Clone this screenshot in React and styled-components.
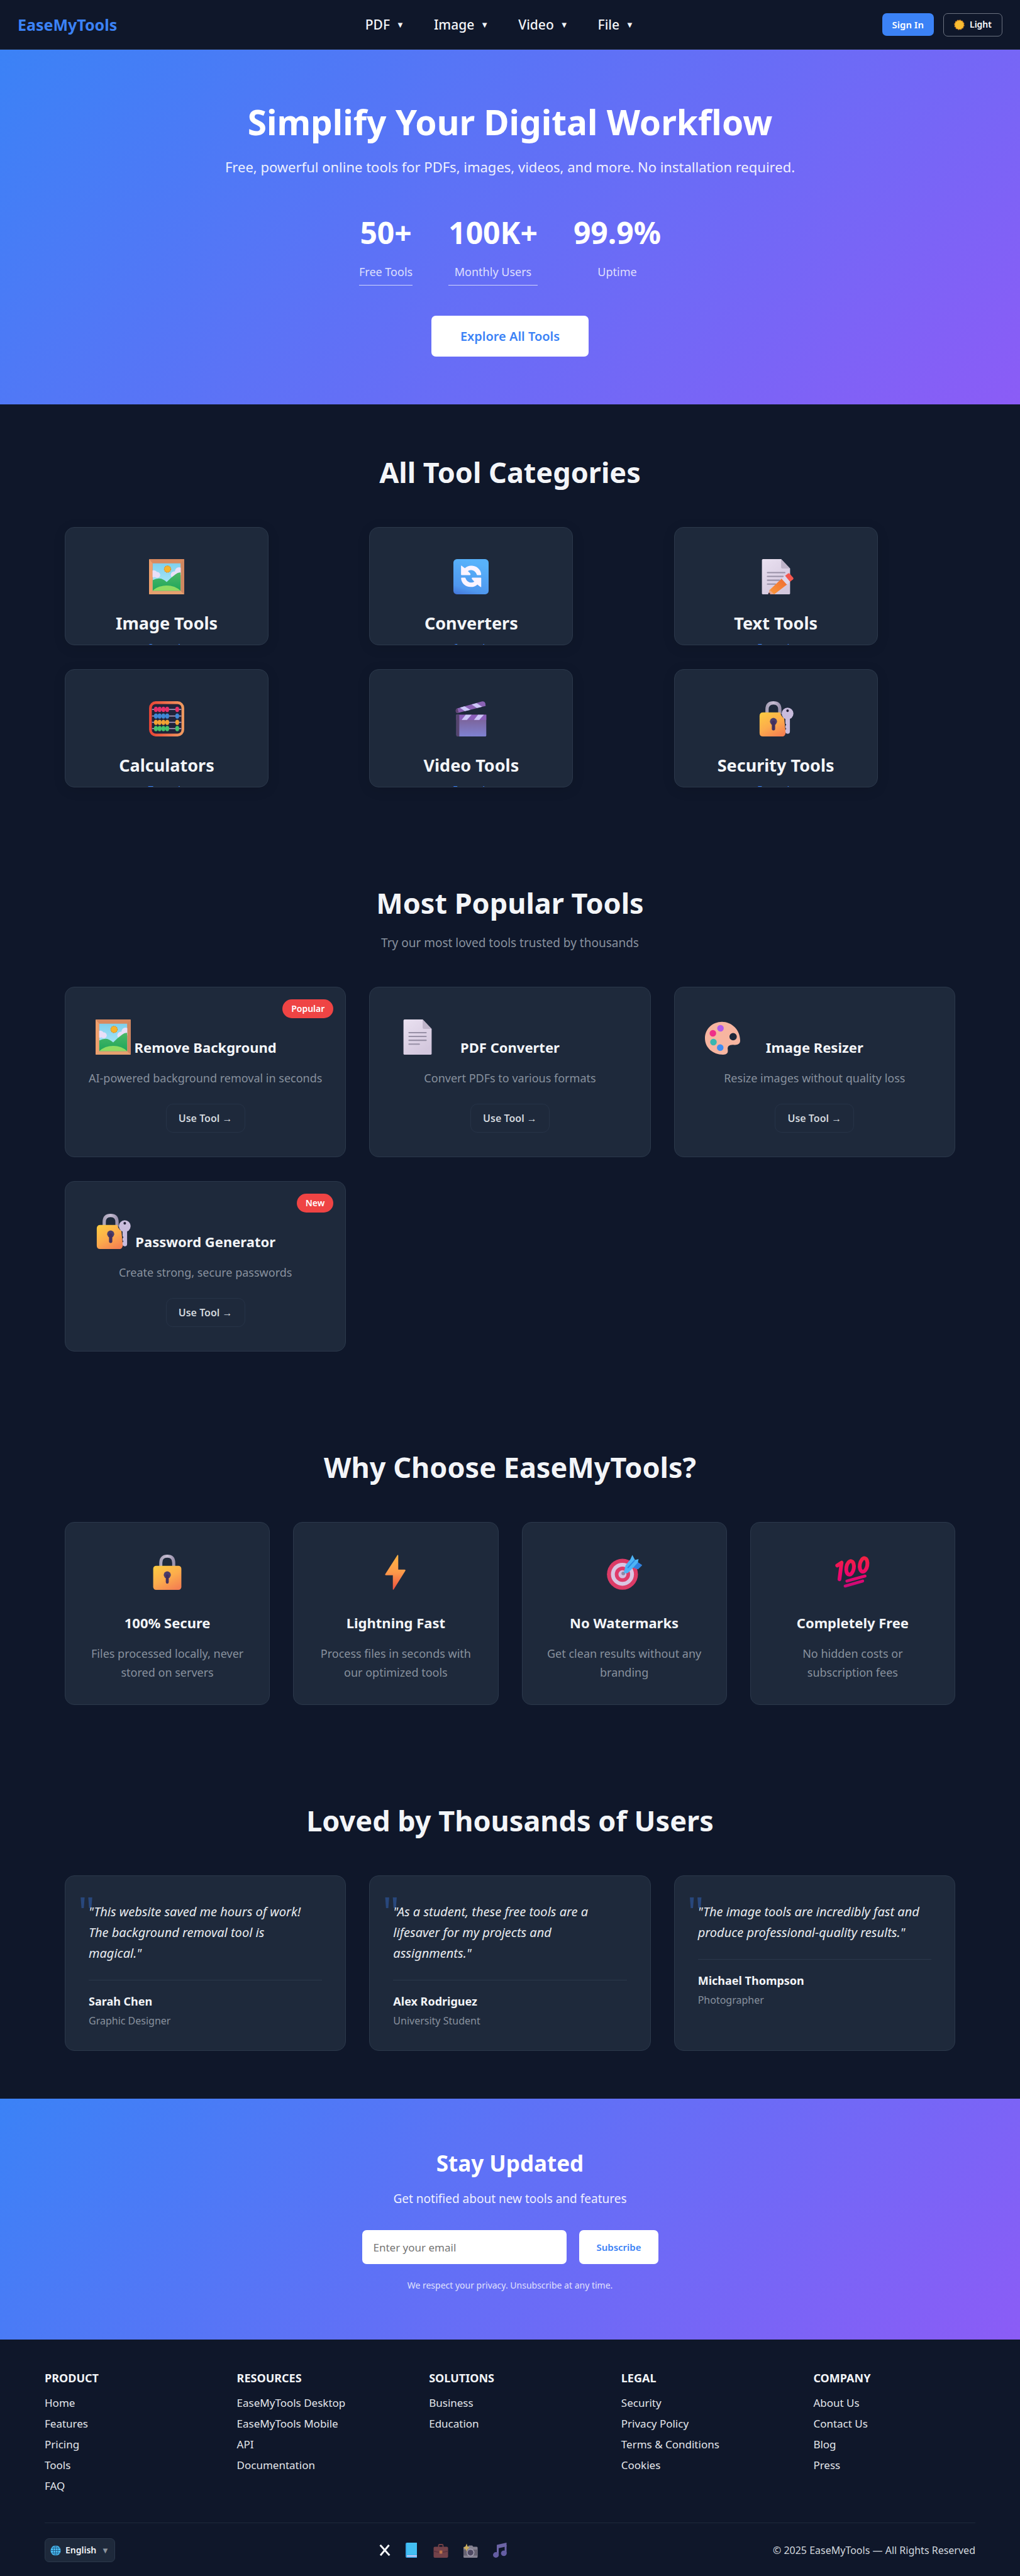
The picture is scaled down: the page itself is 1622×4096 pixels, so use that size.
import React from 'react';
import styled, { createGlobalStyle, css } from 'styled-components';

const color = {
  bg: '#0f172a',
  card: '#1e293b',
  line: '#2b384b',
  text: '#f3f5f8',
  soft: '#d3d8de',
  muted: '#88919e',
  blue: '#3b82f6',
  red: '#ef4444',
};
const gradient = 'linear-gradient(135deg, #3b82f6 0%, #8b5cf6 100%)';

const GlobalStyle = createGlobalStyle`
  *, *::before, *::after { box-sizing: border-box; }
  body {
    margin: 0;
    background: ${color.bg};
    color: ${color.text};
    font-family: "Segoe UI", "Noto Sans", "Open Sans", sans-serif;
    font-size: 18px;
  }
  h1, h2, h3, h4, p, ul { margin: 0; padding: 0; }
  ul { list-style: none; }
  a { color: inherit; text-decoration: none; }
  button, input, select { font-family: inherit; }
`;

/* ---------- header ---------- */
const Header = styled.header`
  display: flex;
  align-items: center;
  justify-content: space-between;
  height: 79px;
  padding: 0 28px;
  border-bottom: 1px solid ${color.card};
`;
const Logo = styled.a`
  color: ${color.blue};
  font-size: 25px;
  font-weight: 700;
  line-height: 36px;
`;
const Nav = styled.nav`
  display: flex;
  gap: 47px;
`;
const NavItem = styled.button`
  display: flex;
  align-items: center;
  gap: 10px;
  padding: 0;
  border: 0;
  background: none;
  color: ${color.text};
  font-size: 21px;
  font-weight: 500;
  line-height: 30px;
  cursor: pointer;
`;
const Caret = styled.span`
  font-size: 13px;
  line-height: 16px;
  color: ${(p) => (p.$dim ? '#8b939d' : 'inherit')};
`;
const Actions = styled.div`
  display: flex;
  align-items: center;
  gap: 15px;
`;
const HeaderButton = styled.button`
  display: flex;
  align-items: center;
  justify-content: center;
  gap: 8px;
  height: 36px;
  padding: 0 16px;
  border: 0;
  border-radius: 7px;
  background: ${color.blue};
  color: #fff;
  font-size: 15px;
  font-weight: 600;
  line-height: 22px;
  cursor: pointer;
  ${(p) =>
    p.$outline &&
    css`
      height: 37px;
      border: 1px solid #6b7280;
      background: transparent;
      font-size: 14px;
    `}
`;

/* ---------- hero ---------- */
const Hero = styled.section`
  display: flex;
  flex-direction: column;
  align-items: center;
  padding: 80px 24px 76px;
  background: ${gradient};
  color: #fff;
  text-align: center;
`;
const HeroTitle = styled.h1`
  font-size: 55px;
  font-weight: 700;
  line-height: 70px;
`;
const HeroLead = styled.p`
  margin-top: 18px;
  font-size: 22px;
  line-height: 36px;
  opacity: 0.9;
`;
const Stats = styled.div`
  display: flex;
  gap: 57px;
  margin-top: 56px;
`;
const Stat = styled.div`
  display: flex;
  flex-direction: column;
  gap: 16px;
`;
const StatValue = styled.strong`
  font-size: 48px;
  font-weight: 700;
  line-height: 62px;
`;
const StatLabel = styled.span`
  padding-bottom: 6px;
  border-bottom: 1px solid ${(p) => (p.$plain ? 'transparent' : 'rgba(255, 255, 255, 0.7)')};
  color: rgba(255, 255, 255, 0.8);
  line-height: 30px;
`;
const HeroButton = styled.a`
  margin-top: 48px;
  padding: 0 46px;
  border-radius: 7px;
  background: #fff;
  color: ${color.blue};
  font-size: 20px;
  font-weight: 600;
  line-height: 65px;
`;

/* ---------- shared section parts ---------- */
const Section = styled.section`
  padding: 76px 24px;
`;
const Container = styled.div`
  max-width: 1416px;
  margin: 0 auto;
`;
const SectionHead = styled.div`
  margin-bottom: 55px;
  text-align: center;
`;
const SectionTitle = styled.h2`
  font-size: 45px;
  font-weight: 700;
  line-height: 64px;
`;
const SectionLead = styled.p`
  margin-top: 16px;
  color: ${color.muted};
  font-size: 19px;
  line-height: 30px;
`;
const Grid = styled.div`
  display: grid;
  grid-template-columns: repeat(${(p) => p.$columns}, minmax(0, 1fr));
  gap: 38px 37px;
`;
const Card = styled.article`
  border: 1px solid ${color.line};
  border-radius: 15px;
  background: ${color.card};
`;
const Icon = styled.svg`
  display: block;
  flex: none;
  width: ${(p) => p.$size || 56}px;
  height: ${(p) => p.$size || 56}px;
  opacity: ${(p) => (p.$dim ? 0.8 : 1)};
`;

const CategoryCard = styled(Card)`
  display: flex;
  flex-direction: column;
  align-items: center;
  max-width: 324px;
  height: 188px;
  padding-top: 50px;
  overflow: hidden;
  box-shadow: 0 4px 20px rgba(0, 0, 0, 0.1);
`;
const CategoryName = styled.h3`
  margin-top: 28px;
  font-size: 27px;
  font-weight: 700;
  line-height: 36px;
`;
const CategoryCount = styled.p`
  margin-top: 8px;
  color: ${color.blue};
  font-size: 16px;
  line-height: 26px;
`;

const ToolCard = styled(Card)`
  position: relative;
  display: flex;
  flex-direction: column;
  align-items: center;
  padding: 51px 34px 38px;
`;
const Badge = styled.span`
  position: absolute;
  top: 19px;
  right: 19px;
  padding: 0 14px;
  border-radius: 15px;
  background: ${color.red};
  color: #fff;
  font-size: 14px;
  font-weight: 600;
  line-height: 30px;
`;
const ToolHead = styled.div`
  display: grid;
  align-self: stretch;
  height: 60px;
  padding: 0 14px;

  > * {
    grid-area: 1 / 1;
  }
`;
const CardTitle = styled.h3`
  align-self: end;
  font-size: 22px;
  font-weight: 700;
  line-height: 32px;
  text-align: center;
`;
const CardText = styled.p`
  margin-top: 18px;
  color: ${color.muted};
  line-height: 30px;
  text-align: center;
`;
const UseButton = styled.a`
  margin-top: 26px;
  padding: 0 19px;
  border: 1px solid #263347;
  border-radius: 11px;
  color: ${color.soft};
  font-size: 16px;
  font-weight: 600;
  line-height: 44px;
`;

const FeatureCard = styled(Card)`
  display: flex;
  flex-direction: column;
  align-items: center;
  padding: 51px 37px 36px;
`;
const FeatureTitle = styled(CardTitle)`
  align-self: center;
  margin-top: 36px;
`;

const ReviewCard = styled(Card)`
  position: relative;
  padding: 40px 37px 34px;
`;
const QuoteMark = styled.span`
  position: absolute;
  top: 22px;
  left: 20px;
  color: rgba(59, 130, 246, 0.35);
  font-size: 66px;
  line-height: 66px;
`;
const ReviewText = styled.p`
  position: relative;
  padding-right: 12px;
  color: #e8ebef;
  font-size: 20px;
  font-style: italic;
  line-height: 33px;
`;
const Reviewer = styled.div`
  display: flex;
  flex-direction: column;
  gap: 3px;
  margin-top: 26px;
  padding-top: 18px;
  border-top: 1px solid ${color.line};
`;
const ReviewerName = styled.strong`
  font-weight: 700;
  line-height: 30px;
`;
const ReviewerRole = styled.span`
  color: ${color.muted};
  font-size: 16px;
  line-height: 26px;
`;

/* ---------- newsletter ---------- */
const Newsletter = styled.section`
  display: flex;
  flex-direction: column;
  align-items: center;
  padding: 76px 24px 74px;
  background: ${gradient};
  color: #fff;
  text-align: center;
`;
const NewsTitle = styled.h2`
  font-size: 35px;
  font-weight: 700;
  line-height: 54px;
`;
const NewsLead = styled.p`
  margin-top: 13px;
  font-size: 19px;
  line-height: 32px;
  opacity: 0.9;
`;
const NewsForm = styled.form`
  display: flex;
  gap: 20px;
  width: 100%;
  max-width: 471px;
  margin-top: 34px;
`;
const EmailInput = styled.input`
  flex: 1;
  min-width: 0;
  height: 54px;
  padding: 0 18px;
  border: 0;
  border-radius: 7px;
  background: #fff;
  color: #111827;
  font-size: 17px;

  &::placeholder {
    color: #757575;
    opacity: 1;
  }
`;
const Subscribe = styled.button`
  padding: 0 27px;
  border: 0;
  border-radius: 7px;
  background: #fff;
  color: ${color.blue};
  font-size: 15px;
  font-weight: 600;
  cursor: pointer;
`;
const NewsNote = styled.p`
  margin-top: 22px;
  font-size: 14px;
  line-height: 24px;
  opacity: 0.8;
`;

/* ---------- footer ---------- */
const Footer = styled.footer`
  padding: 47px 24px 22px;
`;
const FooterInner = styled.div`
  max-width: 1480px;
  margin: 0 auto;
`;
const FooterColumns = styled.div`
  display: grid;
  grid-template-columns: repeat(5, minmax(0, 1fr));
  gap: 48px;
`;
const FooterHeading = styled.h4`
  font-size: 18px;
  font-weight: 700;
  line-height: 28px;
`;
const FooterLinks = styled.ul`
  display: flex;
  flex-direction: column;
  gap: 9px;
  margin-top: 14px;
  color: #e3e6ea;
  font-size: 17px;
  line-height: 24px;
`;
const FooterBar = styled.div`
  display: flex;
  align-items: center;
  justify-content: space-between;
  margin-top: 46px;
  padding-top: 24px;
  border-top: 1px solid ${color.card};
`;
const Language = styled.label`
  display: flex;
  align-items: center;
  gap: 7px;
  height: 38px;
  padding: 0 8px;
  border: 1px solid ${color.line};
  border-radius: 7px;
  background: ${color.card};
`;
const LanguageSelect = styled.select`
  appearance: none;
  padding: 0;
  border: 0;
  background: none;
  color: ${color.text};
  font-size: 14px;
  font-weight: 600;
  line-height: 22px;
`;
const Socials = styled.div`
  display: flex;
  align-items: center;
  gap: 19px;
`;
const SocialLink = styled.a`
  display: flex;
  justify-content: center;
  width: ${(p) => (p.$narrow ? 18 : 28)}px;
`;
const Copyright = styled.p`
  color: ${color.soft};
  font-size: 16px;
  line-height: 26px;
`;

/* ---------- drawings ---------- */
const Picture = () => (
  <Icon viewBox="0 0 60 60" aria-hidden="true">
    <defs>
      <linearGradient id="sky" x1="0" y1="0" x2="0" y2="1">
        <stop offset="0" stopColor="#7fd0ee" />
        <stop offset="1" stopColor="#b5ecf8" />
      </linearGradient>
      <linearGradient id="hill" x1="0" y1="0" x2="0" y2="1">
        <stop offset="0" stopColor="#4cb868" />
        <stop offset="1" stopColor="#1fa65a" />
      </linearGradient>
      <clipPath id="pane"><rect x="6" y="7" width="48" height="47" /></clipPath>
    </defs>
    <rect width="60" height="60" rx="1" fill="#d98a5f" />
    <path d="M0 0L6 7V54L0 60Z" fill="#ef9f6c" />
    <path d="M0 60L6 54H54L60 60Z" fill="#e6a06f" />
    <path d="M60 0L54 7V54L60 60Z" fill="#cf8660" />
    <g clipPath="url(#pane)">
      <rect x="6" y="7" width="48" height="47" fill="url(#sky)" />
      <circle cx="8" cy="25" r="6" fill="#e9dff8" />
      <circle cx="14" cy="27" r="5" fill="#e9dff8" />
      <circle cx="43" cy="27" r="6" fill="#e9dff8" />
      <circle cx="51" cy="21" r="7" fill="#e9dff8" />
      <circle cx="31.5" cy="17" r="5.6" fill="#f7b32b" stroke="#e08f1d" strokeWidth="1.2" strokeDasharray="2 1" />
      <path d="M6 36Q12 33 17 33Q23 33 30 39Q38 31 45 26Q50 22 54 23V54H6Z" fill="url(#hill)" />
      <path d="M6 54Q16 45 30 45Q44 45 54 54Z" fill="#8fdb62" />
    </g>
  </Icon>
);

const Refresh = () => (
  <Icon viewBox="0 0 60 60" aria-hidden="true">
    <defs>
      <linearGradient id="tile" x1="0.3" y1="0" x2="0" y2="1">
        <stop offset="0" stopColor="#58b2fb" />
        <stop offset="0.75" stopColor="#4f97ee" />
        <stop offset="1" stopColor="#4374d8" />
      </linearGradient>
      <path id="turn" d="M13 12Q13 10.5 14.3 11.5L19.5 15.5C23 12.5 27 11 31 11.3C40 11.5 47 18 47.3 26.5Q47 27.3 46.5 27.3H40.7Q40 27.3 39.8 26.5C37.5 19.5 30 16.8 24.8 20.5L28.6 24.5Q30 27.3 28 27.3H14Q13 27.3 13 26.3Z" />
    </defs>
    <rect width="60" height="60" rx="6" fill="url(#tile)" />
    <use href="#turn" fill="#fbf4ff" />
    <use href="#turn" fill="#fbf4ff" transform="rotate(180 30.2 29.4)" />
  </Icon>
);

const Sheet = ({ pencil }) => (
  <Icon viewBox="0 0 60 60" aria-hidden="true">
    <defs>
      <linearGradient id="sheet" x1="0" y1="0" x2="0.6" y2="1">
        <stop offset="0" stopColor="#eae1f1" />
        <stop offset="1" stopColor="#d3c7dd" />
      </linearGradient>
      <linearGradient id="pencil" x1="0" y1="1" x2="1" y2="0">
        <stop offset="0" stopColor="#fb9a3a" />
        <stop offset="1" stopColor="#ee6a33" />
      </linearGradient>
    </defs>
    <path d="M8 0H38.7L54 16V58Q54 60 52 60H8Q6 60 6 58V2Q6 0 8 0Z" fill="url(#sheet)" />
    <path d="M38.7 0L54 16H40.7Q38.7 16 38.7 14Z" fill="#bfb4c9" />
    <path
      d={pencil ? 'M15.5 23H45M15.5 29.5H42M15.5 36H36M15.5 42.5H29' : 'M15.5 22.5H44.5M15.5 29H44.5M15.5 35.5H44.5M15.5 42H33'}
      stroke="#9890a6"
      strokeWidth="2.2"
      strokeLinecap="round"
    />
    {pencil && (
      <g>
        <path d="M40 33L49 43L27 60H17.5L18.7 53Z" fill="url(#pencil)" />
        <path d="M18.7 52L27 60H17.3Z" fill="#e8a58c" />
        <circle cx="18.3" cy="58.8" r="1.6" fill="#3a2638" />
        <path d="M39.5 33.5L45.5 28.5L54 38.5L48.5 43.5Z" fill="#ded7ec" />
        <path d="M45.5 28.5L50 24.8Q52 23.5 53.6 25.2L59.2 31.5Q60.4 33.2 59 34.6L54 38.5Z" fill="#f4574f" />
      </g>
    )}
  </Icon>
);

const beadRows = [
  [14, '#e8306b'],
  [25.3, '#3f87d6'],
  [36, '#f2a233'],
  [46.6, '#45c46c'],
];
const Abacus = () => (
  <Icon viewBox="0 0 60 60" aria-hidden="true">
    <defs>
      <linearGradient id="rim" x1="0" y1="0" x2="1" y2="0">
        <stop offset="0" stopColor="#ea4636" />
        <stop offset="1" stopColor="#f09a60" />
      </linearGradient>
    </defs>
    <rect x="2.4" y="2.4" width="55.2" height="55.2" rx="9" fill="#20233a" stroke="url(#rim)" strokeWidth="4.6" />
    {beadRows.map(([y, fill]) => (
      <g key={y}>
        <path d={`M5 ${y}H55`} stroke="#b9a9c9" strokeWidth="1.6" />
        {[11.7, 18, 24.5, 31, 48].map((x) => (
          <ellipse key={x} cx={x} cy={y} rx="3.3" ry="4.5" fill={fill} />
        ))}
      </g>
    ))}
  </Icon>
);

const Clapper = () => (
  <Icon viewBox="0 0 60 60" aria-hidden="true">
    <defs>
      <linearGradient id="slate" x1="0" y1="0" x2="0" y2="1">
        <stop offset="0" stopColor="#7b5c8c" />
        <stop offset="1" stopColor="#7f82d2" />
      </linearGradient>
    </defs>
    <path d="M7 12L49 0.3Q53 -0.3 54.3 3.5L55 8L7 20Q4 20 4 16Q4 13 7 12Z" fill="#8a62b4" />
    <path d="M4 16Q4 13 7 12L9 19.5L7 20Q4 20 4 16Z" fill="#5d4370" />
    <path d="M11 11L19 8.7L29 14.7L19.5 17Z" fill="#cdc6f8" />
    <path d="M31 5.5L39.5 3.2L49 9.5L40 11.6Z" fill="#cdc6f8" />
    <path d="M5 23H56V58Q56 60 54 60H8Q5 60 5 57Z" fill="url(#slate)" />
    <path d="M5 23H56V32H5Z" fill="#8a5fba" />
    <path d="M5 23H10V60H8Q5 60 5 57Z" fill="#55446e" />
    <path d="M21 23H31L23 32H14Z" fill="#cdc6f8" />
    <path d="M42 23H52L44 32H35Z" fill="#cdc6f8" />
  </Icon>
);

const Padlock = ({ withKey }) => (
  <Icon viewBox="0 0 60 60" aria-hidden="true">
    <defs>
      <linearGradient id="brass" x1="0.2" y1="0" x2="0.8" y2="1">
        <stop offset="0" stopColor="#fdc842" />
        <stop offset="0.5" stopColor="#fcac4c" />
        <stop offset="1" stopColor="#f47f52" />
      </linearGradient>
      <linearGradient id="steel" x1="0" y1="0" x2="1" y2="0">
        <stop offset="0" stopColor="#a9a2b8" />
        <stop offset="0.5" stopColor="#c6bdd3" />
        <stop offset="1" stopColor="#9c93ae" />
      </linearGradient>
    </defs>
    {withKey ? (
      <g>
        <path d="M14.7 22V14Q14.7 2.8 25.6 2.8Q36.5 2.8 36.5 14V22" fill="none" stroke="url(#steel)" strokeWidth="5.5" />
        <path d="M8 19H37Q38 25 44 29.5L46.5 54Q45 60 41 60H8Q2 60 2 54V25Q2 19 8 19Z" fill="url(#brass)" />
        <circle cx="25.7" cy="34.5" r="6" fill="#4a3d6b" />
        <path d="M25.7 36V47" stroke="#43305c" strokeWidth="5.6" strokeLinecap="round" />
        <circle cx="49.7" cy="21" r="10" fill="#c9bcdd" />
        <path d="M46 28H53.7V51.5Q53.7 55.5 50 55.5Q46 55.5 46 51.5V49L47.5 47L46 45V42L47.5 40L46 38Z" fill="#c9bcdd" />
        <circle cx="49.7" cy="16.2" r="2.2" fill="#231f38" />
      </g>
    ) : (
      <g>
        <path d="M19 22V14Q19 2.6 30 2.6Q41 2.6 41 14V22" fill="none" stroke="url(#steel)" strokeWidth="5.2" />
        <rect x="6" y="19" width="48" height="41" rx="5" fill="url(#brass)" />
        <circle cx="30" cy="34.5" r="6" fill="#4a3d6b" />
        <path d="M30 36V47" stroke="#43305c" strokeWidth="5" strokeLinecap="round" />
      </g>
    )}
  </Icon>
);

const Palette = () => (
  <Icon viewBox="0 0 60 60" aria-hidden="true">
    <path
      fillRule="evenodd"
      d="M29 4C45 4 60 17 60 36C60 43 54 44 48 43Q37 43 39 52Q40 60 31 60C13 60 0 48 0 32C0 16 13 4 29 4ZM48 23A6.3 6.3 0 1 0 48 35.6A6.3 6.3 0 1 0 48 23Z"
      fill="#f7b5a0"
    />
    <circle cx="26.5" cy="15" r="5.6" fill="#b35bea" />
    <circle cx="13.5" cy="23.5" r="5.6" fill="#ee2f88" />
    <circle cx="14.5" cy="38.5" r="5.6" fill="#38b6b0" />
    <circle cx="26" cy="48" r="5.6" fill="#3f8df2" />
  </Icon>
);

const Bolt = () => (
  <Icon viewBox="0 0 60 60" aria-hidden="true">
    <defs>
      <linearGradient id="bolt" x1="0" y1="0" x2="0" y2="1">
        <stop offset="0" stopColor="#ffb443" />
        <stop offset="0.5" stopColor="#fb9a4a" />
        <stop offset="1" stopColor="#f0503f" />
      </linearGradient>
    </defs>
    <path d="M33 1Q34.6 -0.6 34.6 2V25.5H45.5Q47.6 25.6 46.6 27.5L27 59Q25.4 61 25.4 58.4V35H13.5Q11.4 34.8 12.6 33Z" fill="url(#bolt)" />
  </Icon>
);

const Target = () => (
  <Icon viewBox="0 0 60 60" aria-hidden="true">
    <circle cx="26.6" cy="33.4" r="26.4" fill="#dc3b66" />
    <circle cx="26.6" cy="33.4" r="19.6" fill="#d9c5e2" />
    <circle cx="26.6" cy="33.4" r="13" fill="#e03a69" />
    <circle cx="26.6" cy="33.4" r="6.8" fill="#d2bfe0" />
    <circle cx="28" cy="32" r="3.2" fill="#8d86a6" />
    <path d="M29 30L32 18L40 8L43.5 0.5L48 9L54 7.5L53 13L60 18L53 25L45 22L36 31Q31 33 29 30Z" fill="#4db4f6" />
    <path d="M45 22L53 13L60 18L53 25Z" fill="#2f7fe0" />
    <path d="M36 22L47 10" stroke="#2c86df" strokeWidth="2" strokeLinecap="round" />
  </Icon>
);

const Hundred = () => (
  <Icon viewBox="0 0 60 60" aria-hidden="true">
    <defs>
      <linearGradient id="score" gradientUnits="userSpaceOnUse" x1="0" y1="0" x2="0" y2="56">
        <stop offset="0" stopColor="#f2263c" />
        <stop offset="0.6" stopColor="#f0056c" />
        <stop offset="1" stopColor="#c40b78" />
      </linearGradient>
    </defs>
    <g fill="none" stroke="url(#score)" strokeWidth="6.4" strokeLinecap="round" strokeLinejoin="round">
      <path d="M3.6 18.5L11 13.5L7.4 42" />
      <ellipse cx="25.5" cy="22.5" rx="6.4" ry="11.6" transform="rotate(10 25.5 22.5)" />
      <ellipse cx="48.5" cy="17.5" rx="6.4" ry="11.6" transform="rotate(10 48.5 17.5)" />
      <path d="M20 45L51 36.5M17 53.5L47 45" strokeWidth="5" />
    </g>
  </Icon>
);

const Sun = () => (
  <Icon viewBox="0 0 16 16" $size={17} aria-hidden="true">
    <circle cx="8" cy="8" r="6.9" fill="#f8b62d" stroke="#dd8a24" strokeWidth="1.6" strokeDasharray="2.2 1.4" />
    <circle cx="8" cy="8" r="6" fill="#fabd32" />
  </Icon>
);

const Globe = () => (
  <Icon viewBox="0 0 16 16" $size={17} aria-hidden="true">
    <circle cx="8" cy="8" r="7.6" fill="#4cc0f5" />
    <g fill="none" stroke="#1c4f7c" strokeWidth="0.8">
      <ellipse cx="8" cy="8" rx="3.4" ry="7.5" />
      <path d="M8 0.5V15.5M0.5 8H15.5M1.6 4.4H14.4M1.6 11.6H14.4" />
    </g>
  </Icon>
);

const Cross = () => (
  <Icon viewBox="0 0 18 18" $size={18} aria-hidden="true">
    <path d="M1.6 0.8L16.4 17.2M15.6 0.8L2 17.2" stroke="#f3f5f8" strokeWidth="3" />
  </Icon>
);
const Book = () => (
  <Icon viewBox="0 0 24 24" $size={24} aria-hidden="true">
    <path d="M3 2Q3 0 5 0H21V20H5V22H21V24H5Q3 24 3 22Z" fill="#37a9ea" />
    <path d="M5 20H21V22.4H5Z" fill="#c9c8f5" />
    <path d="M5 0H21V19.4H5Z" fill="#43bff2" />
  </Icon>
);
const Briefcase = () => (
  <Icon viewBox="0 0 24 24" $size={24} $dim aria-hidden="true">
    <path d="M8.5 7V4.5Q8.5 3 10 3H14Q15.5 3 15.5 4.5V7" fill="none" stroke="#8c4a4c" strokeWidth="1.8" />
    <rect x="0.5" y="6.5" width="23" height="17.5" rx="2" fill="#8d4d52" />
    <path d="M0.5 13.5Q12 17 23.5 13.5" fill="none" stroke="#6e3a44" strokeWidth="1.4" />
    <rect x="9.8" y="12.5" width="4.6" height="5" rx="1" fill="#e98a52" />
  </Icon>
);
const Camera = () => (
  <Icon viewBox="0 0 24 24" $size={24} $dim aria-hidden="true">
    <path d="M1 8Q1 6.5 2.5 6.5H8L9.5 4.5H15L16.5 6.5H22Q23.5 6.5 23.5 8V22.5Q23.5 24 22 24H2.5Q1 24 1 22.5Z" fill="#a39dab" />
    <path d="M1 11H23.5V20.5H1Z" fill="#7d7784" />
    <circle cx="12.2" cy="15.8" r="6.2" fill="#c4bdce" />
    <circle cx="12.2" cy="15.8" r="4.6" fill="#5e5670" />
    <path d="M6 1.5L7.6 6L11 8L7.6 10L6 14L4.2 10L1 8L4.2 6Z" fill="#fbd46b" />
  </Icon>
);
const Notes = () => (
  <Icon viewBox="0 0 24 24" $size={24} $dim aria-hidden="true">
    <path d="M7 3.5L22.5 0V6L10 8.8V19H7Z" fill="#8478c6" />
    <path d="M19.5 4H22.5V17H19.5Z" fill="#8478c6" />
    <ellipse cx="5.6" cy="19.5" rx="4.6" ry="4.4" fill="#7a6fc0" />
    <ellipse cx="18.2" cy="16.8" rx="4.6" ry="4.4" fill="#7a6fc0" />
  </Icon>
);

/* ---------- content ---------- */
const stats = [
  { value: '50+', label: 'Free Tools' },
  { value: '100K+', label: 'Monthly Users' },
  { value: '99.9%', label: 'Uptime', plain: true },
];
const categories = [
  { name: 'Image Tools', icon: <Picture />, count: '8+ tools' },
  { name: 'Converters', icon: <Refresh />, count: '6+ tools' },
  { name: 'Text Tools', icon: <Sheet pencil />, count: '5+ tools' },
  { name: 'Calculators', icon: <Abacus />, count: '7+ tools' },
  { name: 'Video Tools', icon: <Clapper />, count: '5+ tools' },
  { name: 'Security Tools', icon: <Padlock withKey />, count: '5+ tools' },
];
const tools = [
  { name: 'Remove Background', text: 'AI-powered background removal in seconds', icon: <Picture />, badge: 'Popular' },
  { name: 'PDF Converter', text: 'Convert PDFs to various formats', icon: <Sheet /> },
  { name: 'Image Resizer', text: 'Resize images without quality loss', icon: <Palette /> },
  { name: 'Password Generator', text: 'Create strong, secure passwords', icon: <Padlock withKey />, badge: 'New' },
];
const features = [
  { name: '100% Secure', text: 'Files processed locally, never stored on servers', icon: <Padlock /> },
  { name: 'Lightning Fast', text: 'Process files in seconds with our optimized tools', icon: <Bolt /> },
  { name: 'No Watermarks', text: 'Get clean results without any branding', icon: <Target /> },
  { name: 'Completely Free', text: 'No hidden costs or subscription fees', icon: <Hundred /> },
];
const reviews = [
  { text: '"This website saved me hours of work! The background removal tool is magical."', name: 'Sarah Chen', role: 'Graphic Designer' },
  { text: '"As a student, these free tools are a lifesaver for my projects and assignments."', name: 'Alex Rodriguez', role: 'University Student' },
  { text: '"The image tools are incredibly fast and produce professional-quality results."', name: 'Michael Thompson', role: 'Photographer' },
];
const footerColumns = [
  ['PRODUCT', ['Home', 'Features', 'Pricing', 'Tools', 'FAQ']],
  ['RESOURCES', ['EaseMyTools Desktop', 'EaseMyTools Mobile', 'API', 'Documentation']],
  ['SOLUTIONS', ['Business', 'Education']],
  ['LEGAL', ['Security', 'Privacy Policy', 'Terms & Conditions', 'Cookies']],
  ['COMPANY', ['About Us', 'Contact Us', 'Blog', 'Press']],
];
const socials = [
  { label: 'X', icon: <Cross />, narrow: true },
  { label: 'Facebook', icon: <Book /> },
  { label: 'LinkedIn', icon: <Briefcase /> },
  { label: 'Instagram', icon: <Camera /> },
  { label: 'TikTok', icon: <Notes /> },
];

export default function App() {
  return (
    <>
      <GlobalStyle />
      <Header>
        <Logo href="#">EaseMyTools</Logo>
        <Nav>
          {['PDF', 'Image', 'Video', 'File'].map((item) => (
            <NavItem key={item} type="button">
              {item} <Caret>▼</Caret>
            </NavItem>
          ))}
        </Nav>
        <Actions>
          <HeaderButton type="button">Sign In</HeaderButton>
          <HeaderButton type="button" $outline>
            <Sun /> Light
          </HeaderButton>
        </Actions>
      </Header>

      <main>
        <Hero>
          <HeroTitle>Simplify Your Digital Workflow</HeroTitle>
          <HeroLead>Free, powerful online tools for PDFs, images, videos, and more. No installation required.</HeroLead>
          <Stats>
            {stats.map((s) => (
              <Stat key={s.label}>
                <StatValue>{s.value}</StatValue>
                <StatLabel $plain={s.plain}>{s.label}</StatLabel>
              </Stat>
            ))}
          </Stats>
          <HeroButton href="#categories">Explore All Tools</HeroButton>
        </Hero>

        <Section id="categories">
          <Container>
            <SectionHead>
              <SectionTitle>All Tool Categories</SectionTitle>
            </SectionHead>
            <Grid $columns={3}>
              {categories.map((c) => (
                <CategoryCard key={c.name}>
                  {c.icon}
                  <CategoryName>{c.name}</CategoryName>
                  <CategoryCount>{c.count}</CategoryCount>
                </CategoryCard>
              ))}
            </Grid>
          </Container>
        </Section>

        <Section>
          <Container>
            <SectionHead>
              <SectionTitle>Most Popular Tools</SectionTitle>
              <SectionLead>Try our most loved tools trusted by thousands</SectionLead>
            </SectionHead>
            <Grid $columns={3}>
              {tools.map((t) => (
                <ToolCard key={t.name}>
                  {t.badge && <Badge>{t.badge}</Badge>}
                  <ToolHead>
                    {t.icon}
                    <CardTitle>{t.name}</CardTitle>
                  </ToolHead>
                  <CardText>{t.text}</CardText>
                  <UseButton href="#">Use Tool →</UseButton>
                </ToolCard>
              ))}
            </Grid>
          </Container>
        </Section>

        <Section>
          <Container>
            <SectionHead>
              <SectionTitle>Why Choose EaseMyTools?</SectionTitle>
            </SectionHead>
            <Grid $columns={4}>
              {features.map((f) => (
                <FeatureCard key={f.name}>
                  {f.icon}
                  <FeatureTitle>{f.name}</FeatureTitle>
                  <CardText>{f.text}</CardText>
                </FeatureCard>
              ))}
            </Grid>
          </Container>
        </Section>

        <Section>
          <Container>
            <SectionHead>
              <SectionTitle>Loved by Thousands of Users</SectionTitle>
            </SectionHead>
            <Grid $columns={3}>
              {reviews.map((r) => (
                <ReviewCard key={r.name}>
                  <QuoteMark aria-hidden="true">"</QuoteMark>
                  <ReviewText>{r.text}</ReviewText>
                  <Reviewer>
                    <ReviewerName>{r.name}</ReviewerName>
                    <ReviewerRole>{r.role}</ReviewerRole>
                  </Reviewer>
                </ReviewCard>
              ))}
            </Grid>
          </Container>
        </Section>

        <Newsletter>
          <NewsTitle>Stay Updated</NewsTitle>
          <NewsLead>Get notified about new tools and features</NewsLead>
          <NewsForm onSubmit={(e) => e.preventDefault()}>
            <EmailInput type="email" placeholder="Enter your email" aria-label="Email address" />
            <Subscribe type="submit">Subscribe</Subscribe>
          </NewsForm>
          <NewsNote>We respect your privacy. Unsubscribe at any time.</NewsNote>
        </Newsletter>
      </main>

      <Footer>
        <FooterInner>
          <FooterColumns>
            {footerColumns.map(([title, links]) => (
              <div key={title}>
                <FooterHeading>{title}</FooterHeading>
                <FooterLinks>
                  {links.map((link) => (
                    <li key={link}>
                      <a href="#">{link}</a>
                    </li>
                  ))}
                </FooterLinks>
              </div>
            ))}
          </FooterColumns>
          <FooterBar>
            <Language>
              <Globe />
              <LanguageSelect aria-label="Language" defaultValue="en">
                <option value="en">English</option>
              </LanguageSelect>
              <Caret $dim>▼</Caret>
            </Language>
            <Socials>
              {socials.map((s) => (
                <SocialLink key={s.label} href="#" aria-label={s.label} $narrow={s.narrow}>
                  {s.icon}
                </SocialLink>
              ))}
            </Socials>
            <Copyright>© 2025 EaseMyTools — All Rights Reserved</Copyright>
          </FooterBar>
        </FooterInner>
      </Footer>
    </>
  );
}
